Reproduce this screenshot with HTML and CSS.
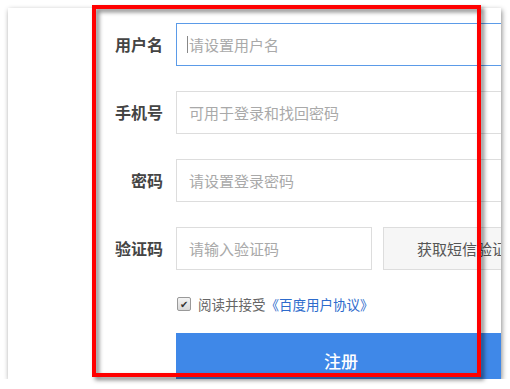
FILE: index.html
```html
<!DOCTYPE html>
<html lang="zh-CN">
<head>
    <meta charset="UTF-8">
    <title>注册</title>
    <link rel="stylesheet" href="styles.css">
</head>
<body>

    <div class="panel">
        <form class="reg-form">
            <label class="lbl">用户名</label>
            <div class="field">
                <input type="text" class="inp focus" placeholder="请设置用户名">
                <span class="caret"></span>
            </div>

            <label class="lbl">手机号</label>
            <div class="field">
                <input type="text" class="inp" placeholder="可用于登录和找回密码">
            </div>

            <label class="lbl">密码</label>
            <div class="field">
                <input type="password" class="inp" placeholder="请设置登录密码">
            </div>

            <label class="lbl">验证码</label>
            <div class="field code-row">
                <input type="text" class="inp inp-code" placeholder="请输入验证码">
                <button type="button" class="btn-sms">获取短信验证码</button>
            </div>

            <div></div>
            <div class="agree">
                <span class="chk">✔</span>
                <span>阅读并接受</span><a class="link">《百度用户协议》</a>
            </div>

            <div></div>
            <button type="button" class="btn-submit">注册</button>
        </form>
    </div>

    <!-- 红色标注框 -->
    <div class="mark"></div>

</body>
</html>
```

FILE: styles.css
```css
/* 注册表单 */
body { margin: 0; background: #fff; font-family: "Noto Sans CJK SC", "Noto Sans", sans-serif; }
.panel { position: relative; margin: 8px 0 0 8px; width: 493px; height: 371px; background: #fff; overflow: hidden; box-shadow: 1px 2px 5px rgba(0,0,0,0.45); }
.reg-form { display: grid; grid-template-columns: 155px 330px; column-gap: 13px; row-gap: 25px; padding-top: 15px; }
.lbl { font-size: 16px; font-weight: bold; color: #444; text-align: right; line-height: 43px; }
.field { position: relative; display: flex; gap: 11px; }
.inp { width: 330px; height: 43px; box-sizing: border-box; border: 1px solid #ddd; padding: 0 12px; font-size: 15px; font-family: inherit; color: #333; outline: none; }
.inp::placeholder { color: #a9a9a9; }
.inp.focus { border-color: #5b9be8; }
.caret { position: absolute; left: 11px; top: 13px; width: 1px; height: 17px; background: #888; }
.inp-code { width: 196px; flex-shrink: 0; }
.btn-sms { flex-shrink: 0; width: 173px; height: 43px; border: 1px solid #ddd; background: #f6f6f6; color: #555; font-size: 15px; font-family: inherit; }
.agree { margin-top: -1px; height: 20px; display: flex; align-items: center; font-size: 13.5px; color: #666; }
.chk { width: 12px; height: 12px; margin: 0 7px 0 1px; border: 1px solid #999; border-radius: 2px; background: linear-gradient(#f4f4f4, #d8d8d8); font-size: 10px; line-height: 12px; text-align: center; color: #333; }
.link { color: #2d6bcc; }
.btn-submit { margin-top: -6px; width: 330px; height: 54px; border: none; background: #3f88e8; color: #fff; font-size: 17px; font-weight: 500; font-family: inherit; }

.mark { position: absolute; left: 92px; top: 5px; width: 381px; height: 364px; border: 4px solid #f00; filter: drop-shadow(3px 3px 2px rgba(0,0,0,0.5)); }
```
